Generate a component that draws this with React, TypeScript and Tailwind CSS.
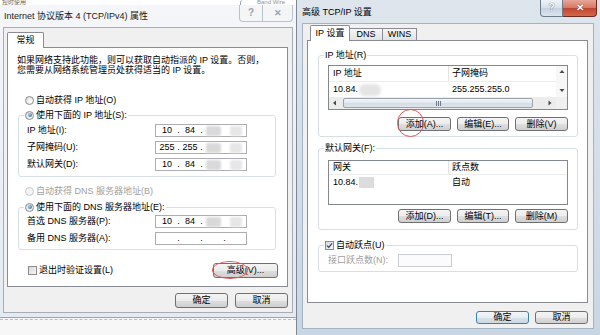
import type { ReactNode } from "react";

const FONT = "font-['Liberation_Sans','Noto_Sans_CJK_SC',sans-serif]";

function Btn({ children, className = "", def = false }: { children: ReactNode; className?: string; def?: boolean }) {
  return (
    <div
      className={`flex items-center justify-center rounded-[3px] border text-[9px] leading-none text-black ${
        def
          ? "border-[#3c7fb1] bg-[linear-gradient(#f1f6fa,#e6edf3_50%,#d7e1ea_51%,#ccd8e3)]"
          : "border-[#707070] bg-[linear-gradient(#f4f4f4,#ececec_50%,#dedede_51%,#d0d0d0)]"
      } ${className}`}
    >
      {children}
    </div>
  );
}

function Radio({ on = false, off = false }: { on?: boolean; off?: boolean }) {
  return (
    <span
      className={`inline-flex h-[9px] w-[9px] shrink-0 items-center justify-center rounded-full border ${
        off ? "border-[#c8c8c8] bg-[#f3f3f3]" : "border-[#8c8c8c] bg-[radial-gradient(circle_at_65%_65%,#ffffff,#d6d6d6)]"
      }`}
    >
      {on && <span className="h-[4px] w-[4px] rounded-full bg-[radial-gradient(circle_at_35%_35%,#9fd0f2,#1f5b8f)]" />}
    </span>
  );
}

function Check({ on = false }: { on?: boolean }) {
  return (
    <span className="inline-flex h-[9px] w-[9px] shrink-0 items-center justify-center border border-[#8c8c8c] bg-[linear-gradient(135deg,#d9d9d9,#f7f7f7)]">
      {on && (
        <svg width="7" height="7" viewBox="0 0 7 7">
          <path d="M1 3.6 L2.8 5.4 L6 1.4" fill="none" stroke="#2a4a6e" strokeWidth="1.3" />
        </svg>
      )}
    </span>
  );
}

function Tri({ dir }: { dir: "up" | "down" | "left" | "right" }) {
  const pts = {
    up: "0.5,4 3,1 5.5,4",
    down: "0.5,1 3,4 5.5,1",
    left: "4,0.5 1,3 4,5.5",
    right: "1.5,0.5 4.5,3 1.5,5.5",
  }[dir];
  return (
    <svg width="6" height="6" viewBox="0 0 6 6">
      <polygon points={pts} fill="#4a4a4a" />
    </svg>
  );
}

function Dot() {
  return <span className="w-[3px] text-center">.</span>;
}

function IpField({ a, b, masked = true }: { a?: string; b?: string; masked?: boolean }) {
  const seg = "flex w-[20px] items-center justify-center";
  return (
    <div className="flex h-[13px] w-[92px] items-center border border-[#abadb3] bg-white pl-[1px] text-[9px] leading-none">
      <span className={seg}>{a}</span>
      <Dot />
      <span className={seg}>{b}</span>
      <Dot />
      <span className={seg}>{masked && <span className="h-[10px] w-[15px] rounded-[2px] bg-[#d9d9d9] blur-[1px]" />}</span>
      {masked ? <span className="w-[3px]" /> : <Dot />}
      <span className={seg}>{masked && <span className="h-[10px] w-[12px] rounded-[2px] bg-[#e6e6e6] blur-[1px]" />}</span>
    </div>
  );
}

function Group({ legend, className = "", children }: { legend: ReactNode; className?: string; children: ReactNode }) {
  return (
    <fieldset className={`rounded-[3px] border border-[#d5dfe5] ${className}`}>
      <legend className="ml-[5px] px-[1px]">
        <span className="flex h-[10px] items-center gap-[2px] text-[9px] leading-none">{legend}</span>
      </legend>
      {children}
    </fieldset>
  );
}

function FieldRow({ label, children }: { label: string; children: ReactNode }) {
  return (
    <div className="flex h-[13px] items-center pl-[8px] text-[9px] leading-none">
      <span className="w-[128px]">{label}</span>
      {children}
    </div>
  );
}

function LeftWindow() {
  return (
    <div className="flex h-[313px] flex-col border-b border-[#9ca5ae] bg-[linear-gradient(#f4f6f9,#e4eaf1)]">
      <div className="flex h-[22px] shrink-0 items-center">
        <span className="pl-[4px] text-[9px] leading-none text-[#1a1a1a]">Internet 协议版本 4 (TCP/IPv4) 属性</span>
        <div className="ml-auto mr-[3px] flex self-start">
          <div className="flex h-[17px] w-[24px] items-center justify-center rounded-bl-[4px] border border-t-0 border-[#b9c2cb] bg-[#f3f5f7] text-[10px] font-bold leading-none text-[#9aa3ad]">
            ?
          </div>
          <div className="flex h-[17px] w-[30px] items-center justify-center rounded-br-[4px] border border-l-0 border-t-0 border-[#b9c2cb] bg-[#f3f5f7] text-[9px] font-bold leading-none text-[#9aa3ad]">
            ✕
          </div>
        </div>
      </div>
      <div className="ml-[3px] flex h-[286px] w-[290px] flex-col border border-[#a7adb3] bg-[#f0f0f0]">
        <div className="relative z-10 -mb-px mt-[4px] flex pl-[3px]">
          <div className="flex h-[16px] w-[37px] items-center justify-center rounded-t-[2px] border border-b-0 border-[#898c95] bg-white text-[9px] leading-none">
            常规
          </div>
        </div>
        <div className="ml-[3px] flex h-[240px] w-[281px] flex-col border border-[#898c95] bg-white">
          <div className="pl-[9px] pt-[7px] text-[9px] leading-[10px] whitespace-nowrap">
            <p>如果网络支持此功能，则可以获取自动指派的 IP 设置。否则，</p>
            <p>您需要从网络系统管理员处获得适当的 IP 设置。</p>
          </div>
          <div className="mt-[20px] flex h-[10px] items-center gap-[2px] pl-[17px] text-[9px] leading-none">
            <Radio />
            自动获得 IP 地址(O)
          </div>
          <Group
            className="ml-[10px] mt-[5px] w-[258px] pb-[5px]"
            legend={
              <>
                <Radio on />
                使用下面的 IP 地址(S):
              </>
            }
          >
            <div className="flex flex-col gap-[4px] pt-[4px]">
              <FieldRow label="IP 地址(I):">
                <IpField a="10" b="84" />
              </FieldRow>
              <FieldRow label="子网掩码(U):">
                <IpField a="255" b="255" />
              </FieldRow>
              <FieldRow label="默认网关(D):">
                <IpField a="10" b="84" />
              </FieldRow>
            </div>
          </Group>
          <div className="mt-[9px] flex h-[10px] items-center gap-[2px] pl-[17px] text-[9px] leading-none text-[#a0a0a0]">
            <Radio off />
            自动获得 DNS 服务器地址(B)
          </div>
          <Group
            className="ml-[10px] mt-[6px] w-[258px] pb-[4px]"
            legend={
              <>
                <Radio on />
                使用下面的 DNS 服务器地址(E):
              </>
            }
          >
            <div className="flex flex-col gap-[4px] pt-[3px]">
              <FieldRow label="首选 DNS 服务器(P):">
                <IpField a="10" b="84" />
              </FieldRow>
              <FieldRow label="备用 DNS 服务器(A):">
                <IpField masked={false} />
              </FieldRow>
            </div>
          </Group>
          <div className="mt-[13px] flex h-[15px] items-center pl-[20px] pr-[9px] text-[9px] leading-none">
            <Check />
            <span className="ml-[2px]">退出时验证设置(L)</span>
            <Btn className="ml-auto h-[15px] w-[65px]">高级(V)...</Btn>
          </div>
        </div>
        <div className="mt-[6px] flex justify-end gap-[7px] pr-[4px]">
          <Btn className="h-[15px] w-[53px]">确定</Btn>
          <Btn className="h-[15px] w-[53px]">取消</Btn>
        </div>
      </div>
    </div>
  );
}

function ListButtons({ items }: { items: string[] }) {
  return (
    <div className="flex justify-end gap-[6px] pr-[9px]">
      <Btn className="h-[14px] w-[53px]">{items[0]}</Btn>
      <Btn className="h-[14px] w-[52px]">{items[1]}</Btn>
      <Btn className="h-[14px] w-[53px]">{items[2]}</Btn>
    </div>
  );
}

function RightWindow() {
  return (
    <div className="flex h-[335px] w-[304px] shrink-0 flex-col border-l border-[#7d8894] bg-[linear-gradient(#dee5ed,#c8d6e4)]">
      <div className="flex h-[23px] shrink-0 items-center">
        <span className="pl-[5px] pt-px text-[9px] leading-none">高级 TCP/IP 设置</span>
        <div className="ml-auto mr-[3px] flex self-start">
          <div className="flex h-[17px] w-[23px] items-center justify-center rounded-bl-[4px] border border-t-0 border-[#6d7b8a] bg-[linear-gradient(#eef3f8,#d6e0ea_50%,#c5d2df_51%,#dbe5ef)] text-[10px] font-bold leading-none text-white [text-shadow:0_0_1px_#222]">
            ?
          </div>
          <div className="flex h-[17px] w-[34px] items-center justify-center rounded-br-[4px] border border-l-0 border-t-0 border-[#6e2b22] bg-[linear-gradient(#e9a797,#d67665_50%,#c2432f_51%,#d2684c)] text-[10px] font-bold leading-none text-white [text-shadow:0_0_1px_#400]">
            ✕
          </div>
        </div>
      </div>
      <div className="ml-[5px] flex h-[306px] w-[292px] flex-col border border-[#a3b3c4] bg-[#f0f0f0]">
        <div className="relative z-10 -mb-px mt-[1px] flex items-end pl-[7px] text-[9px] leading-none">
          <div className="flex h-[16px] w-[40px] items-center justify-center rounded-t-[2px] border border-b-0 border-[#898c95] bg-white">
            IP 设置
          </div>
          <div className="mb-px flex h-[12px] w-[33px] items-center justify-center border border-b-0 border-l-0 border-[#898c95] bg-[linear-gradient(#f6f6f6,#e2e2e2)]">
            DNS
          </div>
          <div className="mb-px flex h-[12px] w-[34px] items-center justify-center border border-b-0 border-l-0 border-[#898c95] bg-[linear-gradient(#f6f6f6,#e2e2e2)]">
            WINS
          </div>
        </div>
        <div className="ml-[4px] flex h-[263px] w-[281px] flex-col border border-[#898c95] bg-white">
          <Group className="ml-[10px] mt-[9px] w-[260px] pb-[5px]" legend="IP 地址(R)">
            <div className="ml-[9px] mt-[5px] flex h-[45px] w-[240px] flex-col border border-[#828790] bg-white text-[9px] leading-none">
              <div className="flex h-[31px]">
                <div className="flex w-[227px] flex-col">
                  <div className="flex h-[16px] items-center border-b border-[#ececec]">
                    <span className="flex h-full w-[120px] items-center border-r border-[#e3e3e3] pl-[4px]">IP 地址</span>
                    <span className="pl-[3px]">子网掩码</span>
                  </div>
                  <div className="flex h-[15px] items-center">
                    <span className="flex w-[120px] items-center pl-[4px]">
                      10.84.
                      <span className="ml-[1px] h-[12px] w-[22px] rounded-full bg-[#e4e4e4] blur-[1.5px]" />
                    </span>
                    <span className="pl-[3px]">255.255.255.0</span>
                  </div>
                </div>
                <div className="flex w-[11px] flex-col items-center justify-between bg-[#f7f7f7] py-[3px]">
                  <Tri dir="up" />
                  <Tri dir="down" />
                </div>
              </div>
              <div className="flex h-[12px] items-center bg-[#ececec]">
                <span className="flex w-[12px] justify-center">
                  <Tri dir="left" />
                </span>
                <div className="ml-[2px] flex h-[10px] w-[190px] items-center justify-center gap-[1px] rounded-[2px] border border-[#9aa4ae] bg-[linear-gradient(#f3f6f9,#e2e8ee_50%,#d4dce4_51%,#dee5ec)]">
                  <span className="h-[5px] w-px bg-[#6f7b88]" />
                  <span className="h-[5px] w-px bg-[#6f7b88]" />
                  <span className="h-[5px] w-px bg-[#6f7b88]" />
                </div>
                <span className="flex-1" />
                <span className="flex w-[12px] justify-center">
                  <Tri dir="right" />
                </span>
                <span className="h-full w-[11px] bg-[#f0f0f0]" />
              </div>
            </div>
            <div className="mt-[7px]">
              <ListButtons items={["添加(A)...", "编辑(E)...", "删除(V)"]} />
            </div>
          </Group>
          <Group className="ml-[10px] mt-[6px] w-[260px] pb-[6px]" legend="默认网关(F):">
            <div className="ml-[9px] mt-[7px] h-[45px] w-[240px] border border-[#828790] bg-white text-[9px] leading-none">
              <div className="flex h-[14px] items-center border-b border-[#ececec]">
                <span className="flex h-full w-[120px] items-center border-r border-[#e3e3e3] pl-[4px]">网关</span>
                <span className="pl-[3px]">跃点数</span>
              </div>
              <div className="flex h-[14px] items-center">
                <span className="flex w-[120px] items-center pl-[4px]">
                  10.84.
                  <span className="ml-[1px] h-[11px] w-[15px] bg-[#dcdcdc] blur-[0.5px]" />
                </span>
                <span className="pl-[3px]">自动</span>
              </div>
            </div>
            <div className="mt-[4px]">
              <ListButtons items={["添加(D)...", "编辑(T)...", "删除(M)"]} />
            </div>
          </Group>
          <Group
            className="ml-[10px] mt-[10px] w-[260px] pb-[4px]"
            legend={
              <>
                <Check on />
                自动跃点(U)
              </>
            }
          >
            <div className="mt-[4px] flex h-[13px] items-center pl-[9px] text-[9px] leading-none text-[#a0a0a0]">
              <span className="w-[70px]">接口跃点数(N):</span>
              <span className="h-[13px] w-[54px] border border-[#c9cdd2] bg-[#fbfbfb]" />
            </div>
          </Group>
        </div>
        <div className="mt-[8px] flex justify-end gap-[6px] pr-[5px]">
          <Btn def className="h-[13px] w-[53px]">确定</Btn>
          <Btn className="h-[13px] w-[53px]">取消</Btn>
        </div>
      </div>
    </div>
  );
}

export default function App() {
  return (
    <div className={`relative flex h-[335px] w-[600px] overflow-hidden bg-[#f5f6f7] text-black ${FONT}`}>
      <div className="flex w-[296px] shrink-0 flex-col">
        <div className="flex h-[5px] items-end overflow-hidden bg-white text-[6px] leading-[5px] text-[#666]">
          <span className="h-[5px] overflow-hidden pl-[2px]">控时使用</span>
          <span className="ml-auto mr-[2px] h-[5px] w-[54px] overflow-hidden rounded-tl-[3px] border-l border-[#9aa4ae] pl-[16px] text-[#8a96a2]">
            Band Wire
          </span>
        </div>
        <LeftWindow />
        <div className="mt-px h-[16px] border-t border-dashed border-[#eaa8ae] bg-[#f7f7f7]" />
      </div>
      <RightWindow />
      <span className="pointer-events-none absolute left-[212px] top-[261px] h-[18px] w-[36px] rounded-[50%] border border-[#e0585a]" />
      <span className="pointer-events-none absolute left-[397px] top-[109px] h-[28px] w-[27px] rounded-full border border-[#e0585a]" />
    </div>
  );
}
